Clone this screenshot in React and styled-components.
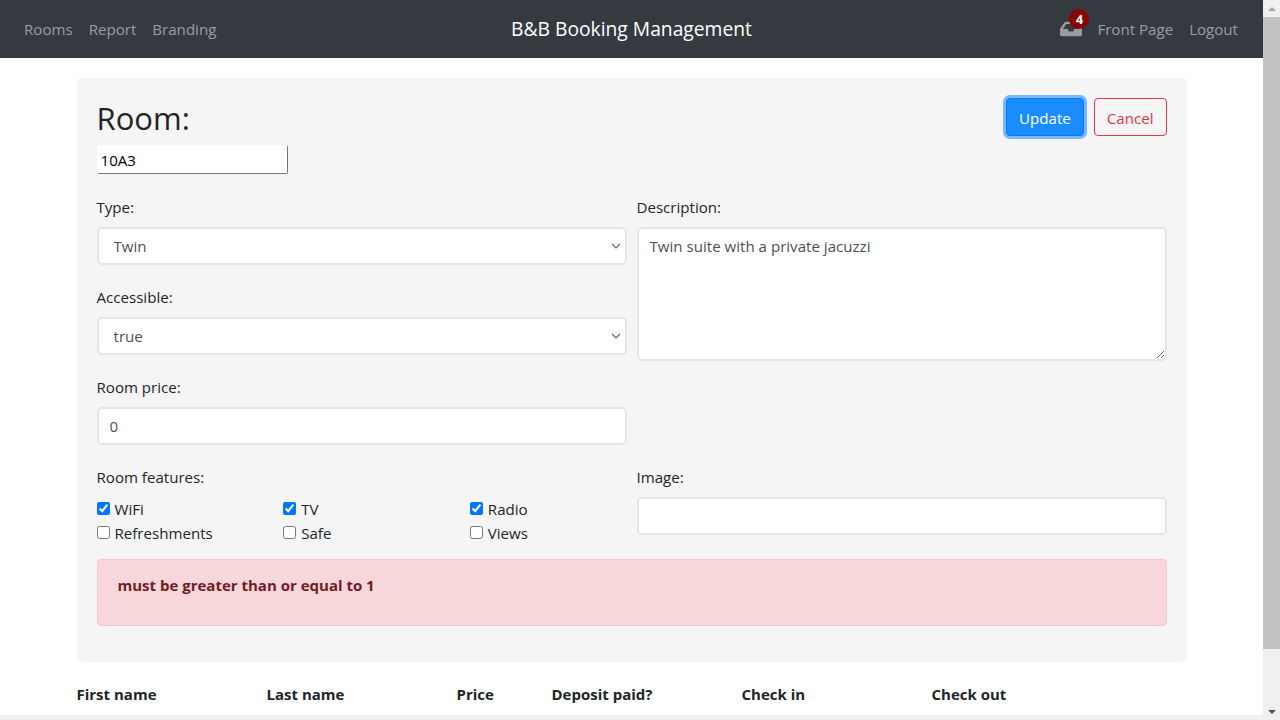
import React from "react";
import styled, { createGlobalStyle } from "styled-components";
import { FaInbox } from "react-icons/fa";

const Global = createGlobalStyle`
  html, body { margin: 0; height: 720px; overflow: hidden; background: #fff; }
  body { font-family: "Open Sans", "Noto Sans", "Liberation Sans", sans-serif; font-size: 15.1px; line-height: 24px; color: #212529; }
  * { box-sizing: border-box; }
`;
const Shell = styled.div`display: flex; width: 1280px; height: 720px; overflow: hidden;`;
const Main = styled.div`width: 1263px; height: 720px; display: flex; flex-direction: column; overflow: hidden;`;
const Page = styled.div`flex: 1; min-height: 0; overflow: hidden;`;
const BottomStrip = styled.div`height: 5px; flex: none; background: #f0f0f0;`;
const ScrollBar = styled.div`width: 17px; height: 720px; background: #f0f0f0; display: flex; flex-direction: column; align-items: center;`;
const ScrollBtn = styled.div`height: 17px; width: 17px; display: flex; align-items: center; justify-content: center;
  &::before { content: ""; border-left: 4px solid transparent; border-right: 4px solid transparent;
    ${p => p.$up ? "border-bottom: 4px solid #a3a3a3;" : "border-top: 4px solid #505050;"} }`;
const ScrollThumb = styled.div`width: 17px; height: 632px; background: #c1c1c1;`;
const ScrollGap = styled.div`flex: 1;`;

const Nav = styled.nav`height: 58px; background: #343a40; padding: 0 16px; display: grid; grid-template-columns: 1fr auto 1fr; align-items: center;`;
const NavGroup = styled.div`display: flex; align-items: center; justify-content: ${p => p.$end ? "flex-end" : "flex-start"}; padding-right: ${p => p.$end ? 1 : 0}px;`;
const NavLink = styled.a`padding: 8px; color: rgba(255,255,255,.5); font-size: 15.1px; white-space: nowrap;`;
const Brand = styled.div`color: #fff; font-size: 19.25px; line-height: 30px; white-space: nowrap;`;
const InboxWrap = styled.div`position: relative; width: 29px; height: 24px; color: rgba(255,255,255,.5); display: flex; align-items: center; font-size: 22px;`;
const Badge = styled.span`position: absolute; left: 9px; top: -8px; width: 20px; height: 20px; border-radius: 50%; background: #8b0000; color: #fff; font-size: 13px; font-weight: 700; line-height: 20px; text-align: center;`;

const Container = styled.div`width: 1110px; margin: 20px 0 0 76.5px;`;
const Card = styled.section`background: #f5f5f5; border-radius: 5px; padding: 20px; height: 584px;`;
const Head = styled.div`display: flex; justify-content: space-between; align-items: flex-start; height: 97px;`;
const Title = styled.h2`margin: 0; font-size: 31px; font-weight: 500; line-height: 38px; height: 47px; white-space: nowrap; padding-top: 1px;`;
const RoomInput = styled.input`display: block; width: 191px; height: 29px; padding: 1px 3px; font: inherit; color: #000; background: #fff; border: 1px solid; border-color: #fff #767676 #767676 #fff; border-radius: 2px;`;
const Actions = styled.div`display: flex; gap: 10px;`;
const Btn = styled.button`height: 38px; padding: 2px 12px 0; font: inherit; border-radius: 4px; border: 1px solid ${p => p.$primary ? "#007bff" : "#dc3545"};
  background: ${p => p.$primary ? "#1a8cff" : "transparent"}; color: ${p => p.$primary ? "#fff" : "#dc3545"};
  ${p => p.$primary && "box-shadow: 0 0 0 3px rgba(0,123,255,.5);"}`;
const Columns = styled.div`display: grid; grid-template-columns: 530px 530px; column-gap: 10px;`;
const Col = styled.div`min-width: 0;`;
const Field = styled.div`margin-bottom: ${p => p.$mb ?? 16}px;`;
const Label = styled.label`display: block; margin-bottom: 8px; height: 24px; white-space: nowrap;`;
const control = `display: block; width: 100%; font: inherit; color: #495057; background-color: #fff; border: 2px solid #e3e6e9; border-radius: 5px; padding: 6px 11px; outline: none;`;
const chevron = `url("data:image/svg+xml,%3Csvg xmlns='http://www.w3.org/2000/svg' width='10' height='6'%3E%3Cpath d='M1 1l4 4 4-4' fill='none' stroke='%23666' stroke-width='1.2'/%3E%3C/svg%3E")`;
const Select = styled.select`${control} height: 38px; appearance: none; padding: 5px 11px 7px 15px; background-image: ${chevron}; background-repeat: no-repeat; background-position: right 4px center;`;
const Input = styled.input`${control} height: 38px;`;
const TextArea = styled.textarea`${control} height: 134px; resize: both; padding-top: 5px;`;
const Checks = styled.div`display: grid; grid-template-columns: repeat(3, 186.67px);`;
const Check = styled.label`display: flex; align-items: center; height: 24px; white-space: nowrap;`;
const Box = styled.input`width: 13px; height: 13px; margin: -2px 5px 0 0;`;
const Alert = styled.div`height: 67px; margin-top: 14px; background: #f8d7da; border: 1px solid #f5c6cb; border-radius: 4px; padding: 13px 20px; color: #721c24; font-weight: 700; font-size: 15px;`;
const TableHead = styled.div`display: grid; grid-template-columns: 190px 190px 95px 190px 190px 190px; margin-top: 20px; font-weight: 700; font-size: 15px; color: #212529;`;
const Cell = styled.div`white-space: nowrap;`;

const features = [["WiFi", true], ["TV", true], ["Radio", true], ["Refreshments", false], ["Safe", false], ["Views", false]];

export default function App() {
  return (
    <>
      <Global />
      <Shell>
        <Main>
          <Page>
            <Nav>
              <NavGroup>
                <NavLink>Rooms</NavLink><NavLink>Report</NavLink><NavLink>Branding</NavLink>
              </NavGroup>
              <Brand>B&amp;B Booking Management</Brand>
              <NavGroup $end>
                <InboxWrap><FaInbox /><Badge>4</Badge></InboxWrap>
                <NavLink>Front Page</NavLink><NavLink>Logout</NavLink>
              </NavGroup>
            </Nav>
            <Container>
              <Card>
                <Head>
                  <div>
                    <Title>Room:</Title>
                    <RoomInput defaultValue="10A3" />
                  </div>
                  <Actions>
                    <Btn $primary>Update</Btn>
                    <Btn>Cancel</Btn>
                  </Actions>
                </Head>
                <Columns>
                  <Col>
                    <Field $mb={20}>
                      <Label>Type:</Label>
                      <Select defaultValue="Twin"><option>Twin</option></Select>
                    </Field>
                    <Field $mb={20}>
                      <Label>Accessible:</Label>
                      <Select defaultValue="true"><option>true</option></Select>
                    </Field>
                    <Field $mb={20}>
                      <Label>Room price:</Label>
                      <Input defaultValue="0" />
                    </Field>
                    <Field $mb={0}>
                      <Label>Room features:</Label>
                      <Checks>
                        {features.map(([n, c]) => (
                          <Check key={n}><Box type="checkbox" defaultChecked={c} />{n}</Check>
                        ))}
                      </Checks>
                    </Field>
                  </Col>
                  <Col>
                    <Field $mb={104}>
                      <Label>Description:</Label>
                      <TextArea defaultValue="Twin suite with a private jacuzzi" />
                    </Field>
                    <Field $mb={0}>
                      <Label>Image:</Label>
                      <Input />
                    </Field>
                  </Col>
                </Columns>
                <Alert>must be greater than or equal to 1</Alert>
              </Card>
              <TableHead>
                <Cell>First name</Cell><Cell>Last name</Cell><Cell>Price</Cell><Cell>Deposit paid?</Cell><Cell>Check in</Cell><Cell>Check out</Cell>
              </TableHead>
            </Container>
          </Page>
          <BottomStrip />
        </Main>
        <ScrollBar>
          <ScrollBtn $up />
          <ScrollThumb />
          <ScrollGap />
          <ScrollBtn />
        </ScrollBar>
      </Shell>
    </>
  );
}
